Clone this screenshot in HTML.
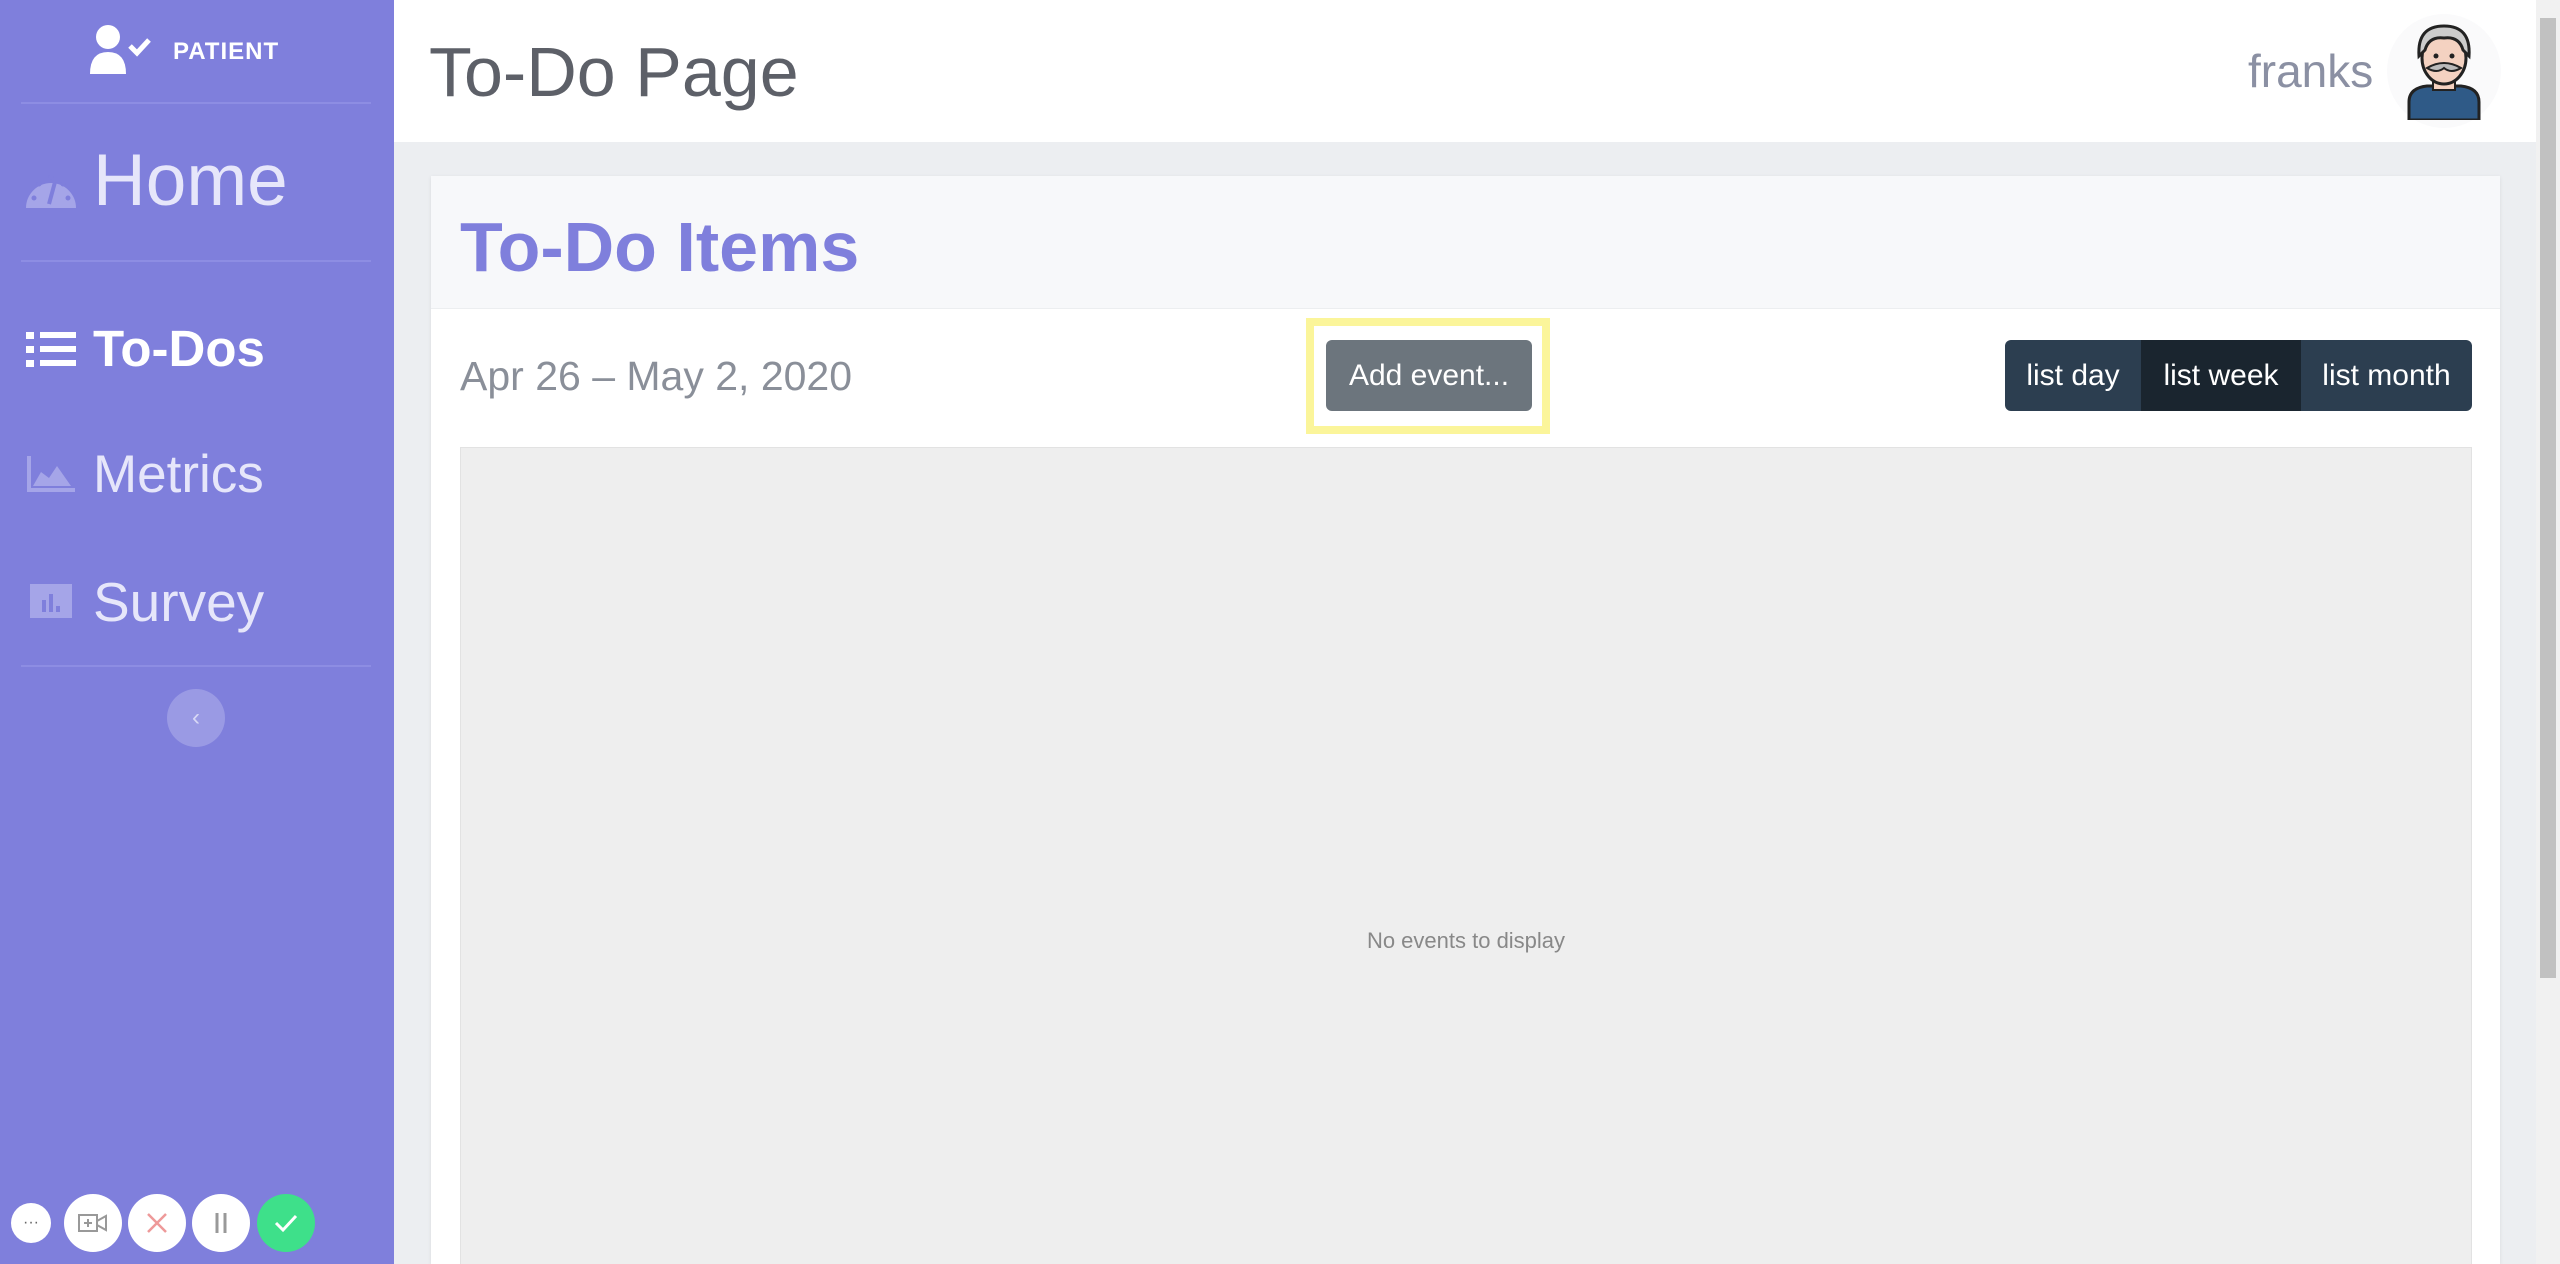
<!DOCTYPE html>
<html style="overflow:hidden;width:2560px;height:1264px"><head><style>
*{margin:0;padding:0;box-sizing:border-box}
body{width:2560px;height:1264px;overflow:hidden;background:#eceef1;font-family:"Liberation Sans",sans-serif;position:relative}
.abs{position:absolute}
#side{left:0;top:0;width:394px;height:1264px;background:#7f7fdc}
.div{position:absolute;left:21px;width:350px;height:2px;background:#8d8de3}
.nav{position:absolute;left:93px;color:#e6e6fa;line-height:1}
#hdr{left:394px;top:0;width:2142px;height:142px;background:#fff}
.btn{position:absolute;border-radius:50%;background:#fff;display:flex;align-items:center;justify-content:center}
</style></head><body>
<div id="side" class="abs">
  <svg class="abs" style="left:88px;top:24px" width="64" height="52" viewBox="0 0 64 52"><circle cx="20" cy="13" r="12" fill="#fff"/><path d="M2 50 Q2 28 20 28 Q38 28 38 50 Z" fill="#fff"/><path d="M42 22 L49 29 L61 16" stroke="#fff" stroke-width="5" fill="none"/></svg>
  <div class="abs" style="left:173px;top:38px;color:#fff;font-weight:bold;font-size:24px;letter-spacing:1px">PATIENT</div>
  <div class="div" style="top:102px"></div>
  <svg class="abs" style="left:24px;top:166px" width="54" height="44" viewBox="0 0 54 44"><path d="M2 42 A25 25 0 1 1 52 42 Z" fill="#a5a5e8"/><g fill="#7f7fdc"><circle cx="10" cy="32" r="2.5"/><circle cx="15" cy="18" r="2.5"/><circle cx="27" cy="11" r="2.5"/><circle cx="39" cy="18" r="2.5"/><circle cx="44" cy="32" r="2.5"/></g><path d="M25 38 L31 16" stroke="#7f7fdc" stroke-width="4"/></svg>
  <div class="nav" style="top:144px;font-size:73px">Home</div>
  <div class="div" style="top:260px"></div>
  <svg class="abs" style="left:26px;top:332px" width="50" height="36" viewBox="0 0 50 36"><g fill="#fff"><rect x="0" y="0" width="8" height="7"/><rect x="14" y="0" width="36" height="6"/><rect x="0" y="14" width="8" height="7"/><rect x="14" y="14" width="36" height="6"/><rect x="0" y="28" width="8" height="7"/><rect x="14" y="28" width="36" height="6"/></g></svg>
  <div class="nav" style="top:323px;font-size:51px;font-weight:bold;color:#fff">To-Dos</div>
  <svg class="abs" style="left:27px;top:456px" width="48" height="36" viewBox="0 0 48 36"><path d="M0 0 V36 H48 V32 H4 V0Z M6 30 L14 16 L22 22 L30 10 L44 30Z" fill="#a5a5e8"/></svg>
  <div class="nav" style="top:448px;font-size:53px">Metrics</div>
  <svg class="abs" style="left:30px;top:584px" width="42" height="34" viewBox="0 0 42 34"><rect width="42" height="34" fill="#a5a5e8"/><g fill="#7f7fdc"><rect x="12" y="16" width="4" height="12"/><rect x="19" y="10" width="4" height="18"/><rect x="26" y="22" width="4" height="6"/></g></svg>
  <div class="nav" style="top:575px;font-size:55px">Survey</div>
  <div class="div" style="top:665px"></div>
  <div class="btn" style="left:167px;top:689px;width:58px;height:58px;background:#9a9ae4;color:#d8d8f5;font-size:24px">‹</div>
  <div class="btn" style="left:11px;top:1203px;width:40px;height:40px;color:#666;font-size:16px">···</div>
  <div class="btn" style="left:64px;top:1194px;width:58px;height:58px"><svg width="30" height="20" viewBox="0 0 30 20"><rect x="1" y="2" width="18" height="16" fill="none" stroke="#999" stroke-width="2"/><path d="M19 8 L28 3 V17 L19 12Z" fill="none" stroke="#999" stroke-width="2"/><path d="M6 10H14M10 6V14" stroke="#999" stroke-width="2"/></svg></div>
  <div class="btn" style="left:128px;top:1194px;width:58px;height:58px"><svg width="22" height="22"><path d="M2 2L20 20M20 2L2 20" stroke="#e99" stroke-width="2.5"/></svg></div>
  <div class="btn" style="left:192px;top:1194px;width:58px;height:58px"><svg width="16" height="22"><path d="M4 1V21M12 1V21" stroke="#999" stroke-width="3"/></svg></div>
  <div class="btn" style="left:257px;top:1194px;width:58px;height:58px;background:#3ee08a"><svg width="24" height="20"><path d="M2 10L9 17L22 3" stroke="#fff" stroke-width="3" fill="none"/></svg></div>
</div>
<div id="hdr" class="abs">
  <div class="abs" style="left:35px;top:32px;font-size:70px;color:#5d6068">To-Do Page</div>
  <div class="abs" style="left:1854px;top:44px;font-size:46px;color:#8b90a3">franks</div>
  <div class="abs" style="left:1993px;top:14px;width:114px;height:114px;border-radius:50%;background:#fafafb"></div>
  <svg class="abs" style="left:2005px;top:20px" width="90" height="100" viewBox="0 0 90 100"><path d="M10 100 V82 Q10 68 28 66 L62 66 Q80 68 80 82 V100Z" fill="#2f5a87" stroke="#222" stroke-width="3"/><rect x="34" y="54" width="22" height="16" fill="#f4d2c1" stroke="#222" stroke-width="2"/><ellipse cx="45" cy="38" rx="22" ry="26" fill="#f4d2c1" stroke="#222" stroke-width="3"/><path d="M20 36 Q18 6 45 6 Q72 6 70 36 L64 30 Q60 16 45 18 Q30 16 26 30Z" fill="#ccc" stroke="#222" stroke-width="3"/><path d="M28 48 Q45 38 62 48 Q52 54 45 48 Q38 54 28 48Z" fill="#bbb" stroke="#222" stroke-width="2"/><circle cx="37" cy="36" r="2.5" fill="#222"/><circle cx="53" cy="36" r="2.5" fill="#222"/></svg>
</div>
<div class="abs" style="left:2536px;top:0;width:24px;height:1264px;background:#f1f1f1"></div>
<div class="abs" style="left:2540px;top:18px;width:16px;height:960px;background:#c1c1c1"></div>
<div class="abs" style="left:431px;top:176px;width:2069px;height:1088px;background:#fff;box-shadow:0 1px 4px rgba(0,0,0,.08);overflow:hidden">
  <div class="abs" style="left:0;top:0;width:2069px;height:133px;background:#f7f8fa;border-bottom:1px solid #eceef0"></div>
  <div class="abs" style="left:29px;top:31px;font-size:70px;font-weight:bold;color:#7f7fdc">To-Do Items</div>
  <div class="abs" style="left:29px;top:177px;font-size:41px;color:#8a8f99">Apr 26 – May 2, 2020</div>
  <div class="abs" style="left:875px;top:142px;width:244px;height:116px;border:8px solid #fbf59a"></div>
  <div class="abs" style="left:895px;top:164px;width:206px;height:71px;background:#6c757d;border-radius:6px;color:#fff;font-size:30px;display:flex;align-items:center;justify-content:center">Add event...</div>
  <div class="abs" style="left:1574px;top:164px;width:467px;height:71px;background:#2c3e50;border-radius:6px;overflow:hidden;color:#fff;font-size:30px;display:flex">
    <div style="width:136px;display:flex;align-items:center;justify-content:center">list day</div>
    <div style="width:160px;background:#1a252f;display:flex;align-items:center;justify-content:center">list week</div>
    <div style="flex:1;display:flex;align-items:center;justify-content:center">list month</div>
  </div>
  <div class="abs" style="left:29px;top:271px;width:2012px;height:817px;background:#eeeeee;border:1px solid #e2e2e2;border-bottom:none">
    <div class="abs" style="left:0;width:100%;top:480px;text-align:center;font-size:22px;color:#888">No events to display</div>
  </div>
</div>
</body></html>
